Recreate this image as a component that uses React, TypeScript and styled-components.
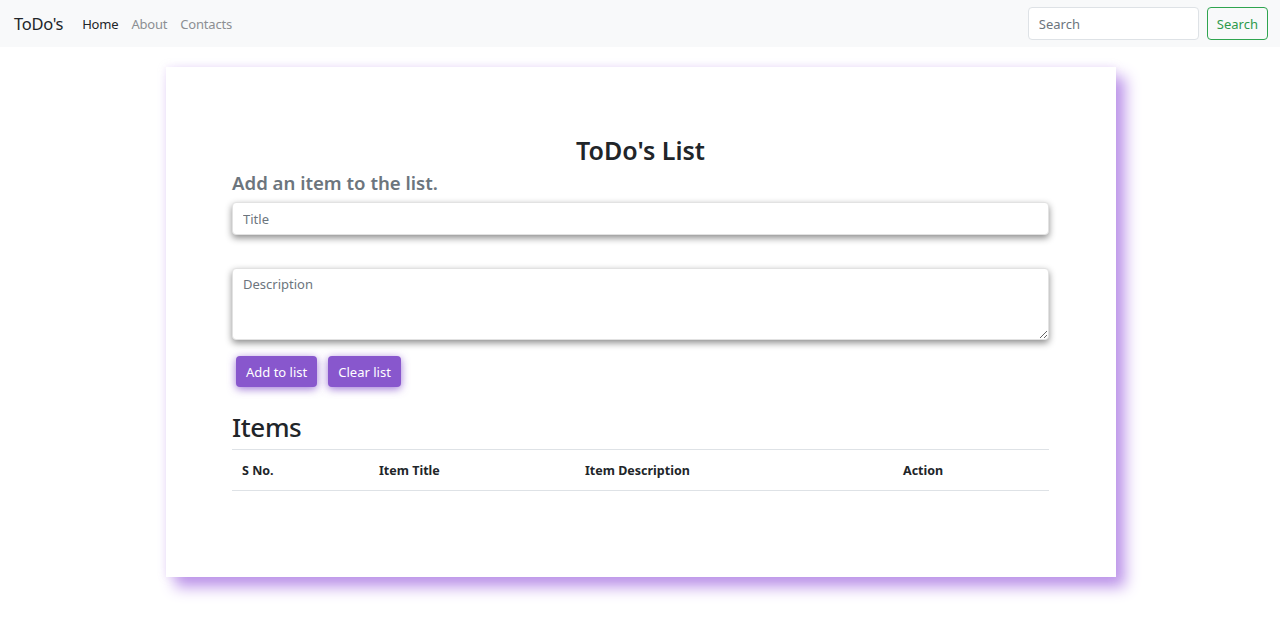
import React from "react";
import styled, { createGlobalStyle } from "styled-components";

const Global = createGlobalStyle`
  * { box-sizing: border-box; }
  body {
    margin: 0;
    background: #fff;
    font-family: "Noto Sans", "Open Sans", sans-serif;
    color: #212529;
  }
`;

const Navbar = styled.nav`
  height: 47px;
  background: #f8f9fa;
  display: flex;
  align-items: center;
  padding: 0 12px 0 14px;
`;

const Brand = styled.span`
  font-size: 16.5px;
  letter-spacing: -0.3px;
  color: #212529;
  margin-right: 19px;
`;

const NavLinks = styled.div`
  display: flex;
  gap: 13px;
  flex: 1;
`;

const NavLink = styled.a<{ $active?: boolean }>`
  font-size: 13px;
  letter-spacing: -0.2px;
  color: ${(p) => (p.$active ? "#212529" : "#8c8f93")};
  text-decoration: none;
`;

const SearchForm = styled.form`
  display: flex;
  gap: 8px;
`;

const SearchInput = styled.input`
  width: 171px;
  height: 33px;
  border: 1px solid #dee2e6;
  border-radius: 4px;
  padding: 0 10px;
  font-family: inherit;
  font-size: 13px;
  background: #fff;
  &::placeholder { color: #6c757d; }
`;

const SearchButton = styled.button`
  height: 33px;
  padding: 0 9px;
  border: 1px solid #2ea44f;
  border-radius: 4px;
  background: transparent;
  color: #2e9a4c;
  font-family: inherit;
  font-size: 13px;
`;

const Main = styled.main`
  display: flex;
  justify-content: center;
  padding: 20px 0 55px 2px;
`;

const Card = styled.section`
  width: 950px;
  height: 510px;
  background: #fff;
  box-shadow: 0 0 8px rgba(190, 150, 235, 0.25), 9px 10px 14px #bd95ea;
  padding: 66px 67px 0 66px;
`;

const Heading = styled.h3`
  margin: 0 0 4px;
  text-align: center;
  font-size: 25px;
  font-weight: 600;
  line-height: 34px;
  color: #212529;
`;

const SubHeading = styled.h5`
  margin: 0 0 7px;
  font-size: 18.6px;
  font-weight: 600;
  line-height: 24px;
  color: #6c757d;
`;

const Field = styled.input`
  display: block;
  width: 100%;
  height: 33px;
  border: 1px solid #e2e2e2;
  border-radius: 4px;
  padding: 0 10px;
  font-family: inherit;
  font-size: 13px;
  background: #fff;
  box-shadow: 0 3px 7px rgba(0, 0, 0, 0.45);
  margin-bottom: 33px;
  &::placeholder { color: #6c757d; }
`;

const Area = styled.textarea`
  display: block;
  width: 100%;
  height: 72px;
  border: 1px solid #e2e2e2;
  border-radius: 4px;
  padding: 6px 10px;
  font-family: inherit;
  font-size: 13px;
  background: #fff;
  box-shadow: 0 3px 7px rgba(0, 0, 0, 0.45);
  resize: vertical;
  margin-bottom: 16px;
  &::placeholder { color: #6c757d; }
`;

const Actions = styled.div`
  display: flex;
  gap: 11px;
  padding-left: 4px;
  margin-bottom: 23px;
`;

const PurpleButton = styled.button`
  height: 31px;
  padding: 0 10px;
  border: none;
  border-radius: 4px;
  background: #8857cd;
  color: #fff;
  font-family: inherit;
  font-size: 13px;
  box-shadow: 0 2px 9px rgba(134, 84, 204, 0.8);
`;

const ItemsTitle = styled.h2`
  margin: 0 0 4px;
  font-size: 26px;
  font-weight: 500;
  letter-spacing: -0.4px;
  line-height: 35px;
`;

const Table = styled.table`
  width: 100%;
  border-collapse: collapse;
`;

const Th = styled.th<{ $w: number }>`
  width: ${(p) => p.$w}px;
  text-align: left;
  font-size: 12.5px;
  font-weight: 700;
  padding: 0 10px;
  height: 41px;
  border-top: 1px solid #dee2e6;
  border-bottom: 1px solid #dee2e6;
`;

export default function App() {
  return (
    <>
      <Global />
      <Navbar>
        <Brand>ToDo's</Brand>
        <NavLinks>
          <NavLink $active href="#">Home</NavLink>
          <NavLink href="#">About</NavLink>
          <NavLink href="#">Contacts</NavLink>
        </NavLinks>
        <SearchForm onSubmit={(e) => e.preventDefault()}>
          <SearchInput placeholder="Search" />
          <SearchButton type="button">Search</SearchButton>
        </SearchForm>
      </Navbar>
      <Main>
        <Card>
          <Heading>ToDo's List</Heading>
          <SubHeading>Add an item to the list.</SubHeading>
          <Field placeholder="Title" />
          <Area placeholder="Description" />
          <Actions>
            <PurpleButton>Add to list</PurpleButton>
            <PurpleButton>Clear list</PurpleButton>
          </Actions>
          <ItemsTitle>Items</ItemsTitle>
          <Table>
            <thead>
              <tr>
                <Th $w={137}>S No.</Th>
                <Th $w={206}>Item Title</Th>
                <Th $w={318}>Item Description</Th>
                <Th $w={156}>Action</Th>
              </tr>
            </thead>
          </Table>
        </Card>
      </Main>
    </>
  );
}
